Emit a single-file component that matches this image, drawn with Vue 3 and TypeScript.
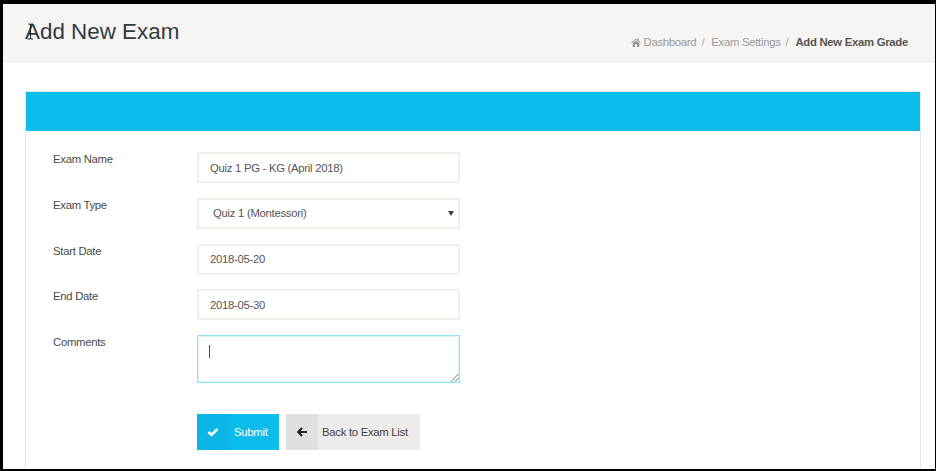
<script setup lang="ts">
const crumbs = ['Dashboard', 'Exam Settings']
</script>

<template>
  <div class="frame">
    <header class="page-head">
      <h1 class="title">
        <svg class="cursor" width="7" height="17" viewBox="0 0 7 17"><path d="M1 1h2l.5 1L4 1h2M3.500 2v13M1 16h2l.5-1 .5 1h2" fill="none" stroke="#222" stroke-width="1"/></svg>
        Add New Exam
      </h1>
      <nav class="crumbs">
        <svg class="home" width="10" height="9" viewBox="0 0 11 10"><path d="M5.500 0.500 0.300 5l.6.700L5.500 1.800l4.600 3.900.6-.7L8.800 3.300V.8H7.500v1.400zM1.800 5.900V10h2.700V7h2v3h2.700V5.900L5.500 2.800z" fill="#9a9a9a"/></svg>
        <template v-for="c in crumbs" :key="c">
          <a class="crumb">{{ c }}</a><span class="sep">/</span>
        </template>
        <strong class="current">Add New Exam Grade</strong>
      </nav>
    </header>
    <main class="content">
      <section class="panel">
        <div class="panel-bar"></div>
        <form class="form" @submit.prevent>
          <div class="row">
            <label>Exam Name</label>
            <input class="field" value="Quiz 1 PG - KG (April 2018)" />
          </div>
          <div class="row">
            <label>Exam Type</label>
            <div class="field select">
              <span>Quiz 1 (Montessori)</span>
              <svg width="6" height="5" viewBox="0 0 6 5"><path d="M0 0h6L3 5z" fill="#444"/></svg>
            </div>
          </div>
          <div class="row">
            <label>Start Date</label>
            <input class="field" value="2018-05-20" />
          </div>
          <div class="row">
            <label>End Date</label>
            <input class="field" value="2018-05-30" />
          </div>
          <div class="row last">
            <label>Comments</label>
            <div class="field area">
              <span class="caret"></span>
              <svg class="grip" width="9" height="9" viewBox="0 0 9 9"><path d="M1 8.500 8.500 1M5 8.500 8.500 5" stroke="#777" stroke-width="1" fill="none"/></svg>
            </div>
          </div>
          <div class="actions">
            <button class="btn primary" type="submit">
              <span class="ico"><svg width="12" height="10" viewBox="0 0 12 10"><path d="M1.500 5 4.500 8 10.500 1.800" fill="none" stroke="#fff" stroke-width="2.600"/></svg></span>
              <span class="lbl">Submit</span>
            </button>
            <button class="btn secondary" type="button">
              <span class="ico"><svg width="10" height="10" viewBox="0 0 10 10"><path d="M5 1 1.300 5 5 9M1.500 5H10" fill="none" stroke="#222" stroke-width="2.200"/></svg></span>
              <span class="lbl">Back to Exam List</span>
            </button>
          </div>
        </form>
      </section>
    </main>
  </div>
</template>

<style>
html, body { margin: 0; background: #000; }
</style>

<style scoped>
.frame {
  box-sizing: border-box;
  width: 936px;
  height: 471px;
  overflow: hidden;
  background: #fff;
  border-style: solid;
  border-color: #000;
  border-width: 4px 1px 2px 3px;
  font-family: "Liberation Sans", Arial, sans-serif;
  font-size: 11.3px;
  letter-spacing: -0.27px;
  color: #555;
}
.page-head {
  box-sizing: border-box;
  height: 58px;
  padding: 0 27px 0 22px;
  display: flex;
  justify-content: space-between;
  background: #f7f5f3;
  border-bottom: 1px solid #ebebeb;
}
.title {
  position: relative;
  margin: 13px 0 0;
  font-size: 22.4px;
  line-height: 30px;
  font-weight: 400;
  letter-spacing: 0;
  color: #333a42;
}
.cursor { position: absolute; left: 2px; top: 6px; }
.crumbs {
  display: flex;
  align-items: center;
  height: 14px;
  margin-top: 31px;
  color: #999;
  white-space: nowrap;
}
.home { margin-right: 3px; }
.sep { margin: 0 7px 0 5px; color: #aaa; }
.current { color: #555; }
.content { padding: 29px 14px 0 22px; }
.panel {
  box-sizing: border-box;
  width: 896px;
  height: 400px;
  border: 1px solid #e2e8ea;
}
.panel-bar { height: 39px; background: #0cbdec; }
.form { padding: 21px 0 0 27px; }
.row { display: flex; height: 31px; margin-bottom: 14.75px; }
.row.last { height: 48px; margin-bottom: 31px; }
.row label { width: 144px; color: #4a4a4a; line-height: 14px; }
.field {
  box-sizing: border-box;
  width: 263px;
  height: 31px;
  padding: 0 11px;
  border: 2px solid #f1efea;
  background: #fff;
  font: 11.3px "Liberation Sans", Arial, sans-serif;
  letter-spacing: -0.27px;
  color: #555;
  outline: none;
}
.select { display: flex; align-items: center; justify-content: space-between; padding: 0 4px 0 14px; }
.area { position: relative; height: 48px; border: 1px solid #8fe2f8; box-shadow: inset 0 0 0 1px #d6f4fc; }
.caret { position: absolute; left: 11px; top: 9px; width: 1px; height: 13px; background: #555; }
.grip { position: absolute; right: 0; bottom: 0; }
.actions { display: flex; gap: 7px; margin-left: 144px; }
.btn {
  display: flex;
  align-items: stretch;
  height: 36px;
  padding: 0;
  border: 0;
  font: 11.3px "Liberation Sans", Arial, sans-serif;
  letter-spacing: -0.27px;
}
.ico { width: 32px; display: flex; align-items: center; justify-content: center; }
.lbl { align-self: center; }
.primary { width: 82px; background: #0cbdec; color: #fff; }
.primary .ico { background: #0bb6e6; }
.primary .lbl { margin-left: 5px; }
.secondary { width: 134px; background: #eeecea; color: #444; }
.secondary .ico { background: #e0dfdc; }
.secondary .lbl { margin-left: 4px; }
</style>
